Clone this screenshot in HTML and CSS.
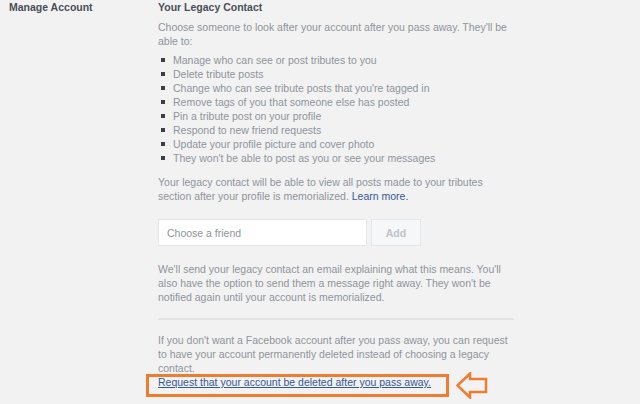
FILE: index.html
```html
<!DOCTYPE html>
<html lang="en">
<head>
  <meta charset="UTF-8">
  <meta name="viewport" content="width=device-width, initial-scale=1.0">
  <title>Manage Account</title>
  <link rel="stylesheet" href="styles.css">
</head>
<body>
  <div class="settings">
    <div class="side">Manage Account</div>

    <!-- Legacy contact -->
    <div class="main">
      <h2>Your Legacy Contact</h2>
      <p class="intro">Choose someone to look after your account after you pass away. They'll be able to:</p>
      <ul class="perms">
        <li>Manage who can see or post tributes to you</li>
        <li>Delete tribute posts</li>
        <li>Change who can see tribute posts that you're tagged in</li>
        <li>Remove tags of you that someone else has posted</li>
        <li>Pin a tribute post on your profile</li>
        <li>Respond to new friend requests</li>
        <li>Update your profile picture and cover photo</li>
        <li>They won't be able to post as you or see your messages</li>
      </ul>
      <p class="note">Your legacy contact will be able to view all posts made to your tributes section after your profile is memorialized. <a href="#">Learn more.</a></p>

      <form class="chooser">
        <input type="text" placeholder="Choose a friend">
        <button type="button" disabled>Add</button>
      </form>

      <p class="note">We'll send your legacy contact an email explaining what this means. You'll also have the option to send them a message right away. They won't be notified again until your account is memorialized.</p>

      <hr>

      <p class="delete-text">If you don't want a Facebook account after you pass away, you can request to have your account permanently deleted instead of choosing a legacy contact.</p>
      <div class="delete-row">
        <a class="delete-link" href="#">Request that your account be deleted after you pass away.</a>
        <span class="highlight"></span>
        <svg class="arrow" width="32" height="27" viewBox="0 0 32 27">
          <path d="M1.5 13.5 L14 1.5 L14 7 L30 7 L30 20 L14 20 L14 25.5 Z" fill="none" stroke="#ed7d31" stroke-width="2.5" stroke-linejoin="miter"/>
        </svg>
      </div>
    </div>
  </div>
</body>
</html>
```

FILE: styles.css
```css
body {
  margin: 0;
  padding-bottom: 15px;
  background-color: #f2f2f2;
  color: #90949c;
  font-family: "Liberation Sans", Arial, sans-serif;
  font-size: 10.5px;
  line-height: 14px;
}

.settings {
  display: flex;
  padding-left: 9px;
}

.side {
  width: 149px;
  font-weight: bold;
  color: #4b4f56;
}

.main {
  width: 356px;
}

h2 {
  margin: 0;
  font-size: 10.5px;
  line-height: 14px;
  color: #4b4f56;
}

p {
  margin: 0;
}

.intro {
  margin-top: 6px;
}

.perms {
  list-style: none;
  margin: 5px 0 0;
  padding: 0;
}

.perms li {
  position: relative;
  padding-left: 15px;
}

.perms li::before {
  content: "";
  position: absolute;
  left: 3px;
  top: 5px;
  width: 4px;
  height: 4px;
  background-color: #3b3e44;
}

.note {
  margin-top: 10px;
}

a {
  color: #365899;
  text-decoration: none;
}

.chooser {
  display: flex;
  gap: 4px;
  margin: 16px 0;
}

.chooser input {
  width: 209px;
  height: 27px;
  box-sizing: border-box;
  margin: 0;
  padding: 0 8px;
  border: 1px solid #e5e6e9;
  background-color: #fff;
  font-family: inherit;
  font-size: 10.5px;
}

.chooser input::placeholder {
  color: #90949c;
}

.chooser button {
  width: 50px;
  height: 27px;
  margin: 0;
  border: 1px solid #e5e6e9;
  background-color: #f6f7f9;
  color: #bec3c9;
  font-family: inherit;
  font-size: 10.5px;
  font-weight: bold;
}

hr {
  margin: 14px 0 13px;
  border: 0;
  border-top: 2px solid #e3e4e6;
}

.delete-row {
  position: relative;
}

.delete-link {
  text-decoration: underline;
}

.highlight {
  position: absolute;
  left: -12px;
  top: -1px;
  width: 297px;
  height: 17px;
  border: 3px solid #ed7d31;
}

.arrow {
  position: absolute;
  left: 298px;
  top: -3px;
}
```
